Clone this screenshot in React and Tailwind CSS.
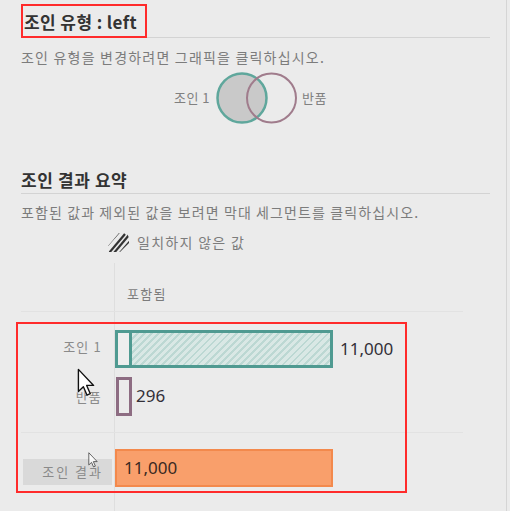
import React from "react";

const KR = { fontFamily: '"Noto Sans CJK KR", "Noto Sans", sans-serif' };
const NUM = { fontFamily: '"Noto Sans", sans-serif' };

function Cursor({ className }) {
    return (
        <svg viewBox="0 0 13 21" className={className}>
            <path
                d="M1 1 L1 17 L4.6 13.6 L7.2 19.6 L9.6 18.6 L7 12.6 L12 12.6 Z"
                fill="#ffffff"
                stroke="#111111"
                strokeWidth="1"
                strokeLinejoin="round"
            />
        </svg>
    );
}

function Venn() {
    return (
        <svg width="84" height="56" viewBox="0 0 84 56">
            <circle cx="27" cy="28" r="24.5" fill="#c9c9c9" stroke="#5fa79c" strokeWidth="2.5" />
            <circle cx="56.5" cy="28" r="24.5" fill="none" stroke="#a07c8c" strokeWidth="2" />
        </svg>
    );
}

function Hatch() {
    return (
        <svg width="21" height="19" viewBox="0 0 21 19">
            <defs>
                <clipPath id="hc">
                    <polygon points="1,19 0,13 11,0 19,0 21,5 21,10 12,19" />
                </clipPath>
            </defs>
            <g clipPath="url(#hc)" stroke="#333333" strokeWidth="2.2">
                <line x1="-3" y1="15" x2="12" y2="-2" />
                <line x1="1" y1="20" x2="17" y2="1" />
                <line x1="6" y1="20" x2="21" y2="2" />
                <line x1="11" y1="21" x2="24" y2="6" />
            </g>
        </svg>
    );
}

export default function App() {
    return (
        <div className="relative flex w-[510px] h-[511px] overflow-hidden bg-[#ebebeb]" style={KR}>
            <div className="w-[507px] border-r border-[#d5d5d5] pl-[21px] pt-[4px]">
                <div className="w-[469px]">
                    {/* join type header */}
                    <div className="h-[34px] border-b border-[#d3d3d3]">
                        <div className="inline-flex items-center h-[34px] border-2 border-[#ff2b2b] pl-[1px] pr-[8px]">
                            <span className="text-[17px] font-bold text-[#333333] leading-none tracking-[0.4px]">조인 유형 : left</span>
                        </div>
                    </div>
                    <p className="mt-[10px] text-[14px] leading-[18px] tracking-[1.2px] text-[#7c7c7c]">
                        조인 유형을 변경하려면 그래픽을 클릭하십시오.
                    </p>

                    <div className="mt-[4px] flex items-center h-[56px]">
                        <span className="w-[42px] ml-[147px] text-right text-[13px] tracking-[0.5px] text-[#808080] mr-[5px]">조인 1</span>
                        <Venn />
                        <span className="ml-[3px] text-[13px] tracking-[0.5px] text-[#808080]">반품</span>
                    </div>

                    {/* summary header */}
                    <div className="mt-[39px] h-[29px] border-b border-[#d3d3d3] flex items-center">
                        <span className="text-[17px] font-bold text-[#333333] leading-none tracking-[0.6px]">조인 결과 요약</span>
                    </div>
                    <p className="mt-[9px] text-[14px] leading-[18px] tracking-[1.1px] text-[#7c7c7c]">
                        포함된 값과 제외된 값을 보려면 막대 세그먼트를 클릭하십시오.
                    </p>

                    <div className="mt-[11px] flex items-center h-[20px] pl-[87px] gap-[8px]">
                        <Hatch />
                        <span className="text-[14px] tracking-[1.3px] text-[#7c7c7c]">일치하지 않은 값</span>
                    </div>

                    {/* chart */}
                    <div className="mt-[11px] w-[442px]">
                        <div className="flex h-[49px] border-b border-[#e2e2e2]">
                            <div className="w-[94px] border-r border-[#dedede]" />
                            <div className="pl-[12px] pt-[22px] text-[13px] leading-[18px] tracking-[1.3px] text-[#7c7c7c]">포함됨</div>
                        </div>
                        <div className="flex h-[60px]">
                            <div className="w-[94px] border-r border-[#dedede] flex items-center justify-end pr-[12px] pt-[10px]">
                                <span className="text-[13px] tracking-[1.2px] text-[#8a8a8a]">조인 1</span>
                            </div>
                            <div className="flex items-center pt-[14px]">
                                <div className="flex w-[218px] h-[38px] border-[3px] border-[#4f9a91]">
                                    <div className="w-[14px] bg-[#eeeeee] border-r-[3px] border-[#4f9a91]" />
                                    <div className="flex-1 bg-[repeating-linear-gradient(135deg,#d9e8e5_0px,#d9e8e5_3px,#bcd8d3_3px,#bcd8d3_5px)]" />
                                </div>
                                <span className="ml-[7px] text-[17px] text-[#333038]" style={NUM}>11,000</span>
                            </div>
                        </div>
                        <div className="flex h-[61px] border-b border-[#e2e2e2]">
                            <div className="w-[94px] border-r border-[#dedede] flex items-center justify-end pr-[12px] pb-[10px]">
                                <span className="text-[13px] tracking-[1.2px] text-[#8a8a8a]">반품</span>
                            </div>
                            <div className="flex items-start pt-[5px] pl-[1px]">
                                <div className="w-[16px] h-[39px] border-[3px] border-[#8d6c82]" />
                                <span className="ml-[4px] mt-[6px] text-[17px] text-[#333038]" style={NUM}>296</span>
                            </div>
                        </div>
                        <div className="flex h-[80px]">
                            <div className="w-[94px] border-r border-[#dedede] pl-[2px] pr-[2px] pt-[26px]">
                                <div className="h-[26px] bg-[#d9d9d9] flex items-center justify-end pr-[9px]">
                                    <span className="text-[13px] tracking-[2px] text-[#8a8a8a]">조인 결과</span>
                                </div>
                            </div>
                            <div className="pt-[16px]">
                                <div className="w-[218px] h-[38px] bg-[#f99f6b] border-2 border-[#f3894c] flex items-center pl-[7px]">
                                    <span className="text-[17px] text-[#3b2a22]" style={NUM}>11,000</span>
                                </div>
                            </div>
                        </div>
                    </div>
                </div>
            </div>

            {/* annotation box and cursors */}
            <div className="absolute left-[16px] top-[322px] w-[391px] h-[171px] border-2 border-[#ff2b2b] pointer-events-none" />
            <Cursor className="absolute left-[77px] top-[368px] w-[18px] h-[29px]" />
            <Cursor className="absolute left-[88px] top-[452px] w-[10px] h-[16px] opacity-80" />
        </div>
    );
}
